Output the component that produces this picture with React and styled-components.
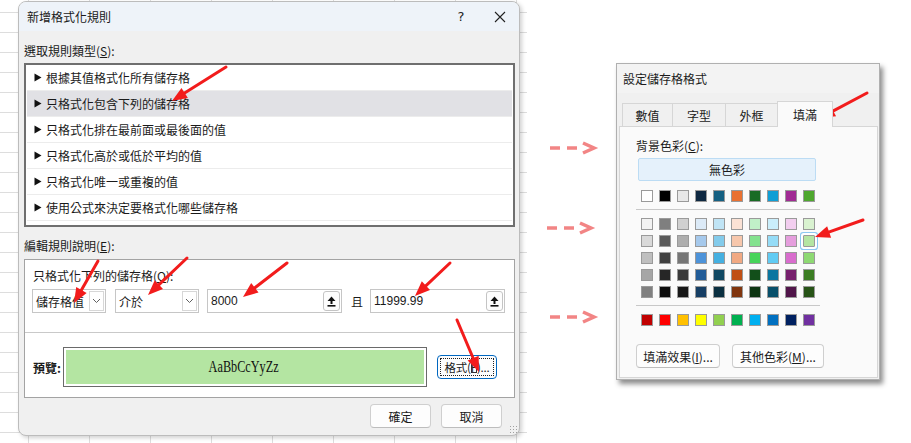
import React from "react";
import styled, { createGlobalStyle } from "styled-components";

const GlobalStyle = createGlobalStyle`
  html, body {
    margin: 0;
    padding: 0;
    background: #ffffff;
  }
  body {
    font-family: "Noto Sans CJK TC", "Noto Sans", sans-serif;
    font-size: 12px;
    color: #1b1b1b;
  }
`;

const ruleTypes = [
  "根據其值格式化所有儲存格",
  "只格式化包含下列的儲存格",
  "只格式化排在最前面或最後面的值",
  "只格式化高於或低於平均的值",
  "只格式化唯一或重複的值",
  "使用公式來決定要格式化哪些儲存格",
];

const baseRow = ["#ffffff", "#000000", "#e8e8e8", "#0e2841", "#156082", "#e97132", "#196b24", "#0f9ed5", "#a02b93", "#4ea72e"];

const themeRows = [
  ["#f2f2f2", "#7f7f7f", "#d0d0d0", "#dceaf7", "#c0e4f5", "#fbe2d5", "#c1f0c8", "#caeefb", "#f2ceef", "#d9f2d0"],
  ["#d9d9d9", "#595959", "#aeaeae", "#a6c9ec", "#83cbeb", "#f7c7ac", "#83e28e", "#95dcf7", "#e59edd", "#b4e5a2"],
  ["#bfbfbf", "#404040", "#767676", "#4d93d9", "#45b0e1", "#f1a983", "#47d45a", "#61cbf3", "#d86dcd", "#8ed973"],
  ["#a6a6a6", "#262626", "#3a3a3a", "#215c98", "#104862", "#c04f15", "#124f1a", "#0b76a0", "#77206d", "#3b7d23"],
  ["#808080", "#0d0d0d", "#171717", "#163e64", "#0b3041", "#80350e", "#0d3512", "#074f6a", "#501549", "#275317"],
];

const standardRow = ["#c00000", "#ff0000", "#ffc000", "#ffff00", "#92d050", "#00b050", "#00b0f0", "#0070c0", "#002060", "#7030a0"];

const redArrows = [
  [226, 67, 172, 101],
  [98, 261, 74, 303],
  [187, 258, 148, 295],
  [287, 263, 243, 297],
  [450, 263, 415, 296],
  [457, 320, 479, 372],
  [867, 93, 820, 118],
  [863, 220, 815, 237],
];

const dashArrows = [
  [550, 148],
  [547, 228],
  [550, 317],
];

const RedArrow = ({ x1, y1, x2, y2 }) => {
  const dx = x2 - x1;
  const dy = y2 - y1;
  const len = Math.sqrt(dx * dx + dy * dy);
  const ux = dx / len;
  const uy = dy / len;
  const headLen = 15;
  const headW = 6;
  const bx = x2 - ux * headLen;
  const by = y2 - uy * headLen;
  const pts = `${x2},${y2} ${bx - uy * headW},${by + ux * headW} ${bx + uy * headW},${by - ux * headW}`;
  return (
    <g>
      <line x1={x1} y1={y1} x2={bx + ux * 2} y2={by + uy * 2} stroke="#f21c1c" strokeWidth="3" strokeLinecap="round" />
      <polygon points={pts} fill="#f21c1c" />
    </g>
  );
};

const DashArrow = ({ x, y }) => (
  <g stroke="#f28585" strokeWidth="3.5" fill="none">
    <line x1={x} y1={y} x2={x + 10} y2={y} />
    <line x1={x + 17} y1={y} x2={x + 27} y2={y} />
    <polyline points={`${x + 33},${y - 5} ${x + 44},${y} ${x + 33},${y + 5}`} strokeLinejoin="miter" />
  </g>
);

const Chevron = () => (
  <svg width="9" height="6" viewBox="0 0 9 6">
    <polyline points="1,1 4.5,4.5 8,1" fill="none" stroke="#606060" strokeWidth="1" />
  </svg>
);

const RefIcon = () => (
  <svg width="9" height="11" viewBox="0 0 9 11">
    <polygon points="4.5,0.5 8.5,5 5.5,5 5.5,8 3.5,8 3.5,5 0.5,5" fill="#111" />
    <rect x="0.5" y="9" width="8" height="1.6" fill="#111" />
  </svg>
);

const CloseIcon = () => (
  <svg width="12" height="12" viewBox="0 0 12 12">
    <path d="M1 1 L11 11 M11 1 L1 11" stroke="#222" strokeWidth="1.1" />
  </svg>
);

const BulletIcon = () => (
  <svg width="8" height="9" viewBox="0 0 8 9">
    <polygon points="0.5,0.5 7.5,4.5 0.5,8.5" fill="#111" />
  </svg>
);

export default function App() {
  return (
    <Page>
      <GlobalStyle />
      <SheetArea>
        <RuleDialog>
          <TitleBar>
            <TitleText>新增格式化規則</TitleText>
            <TitleControls>
              <HelpMark>?</HelpMark>
              <CloseMark>
                <CloseIcon />
              </CloseMark>
            </TitleControls>
          </TitleBar>
          <DialogBody>
            <SectionLabel>
              選取規則類型(<u>S</u>):
            </SectionLabel>
            <ListBox>
              {ruleTypes.map((t, i) => (
                <ListItem key={t} $selected={i === 1}>
                  <Bullet>
                    <BulletIcon />
                  </Bullet>
                  {t}
                </ListItem>
              ))}
            </ListBox>
            <SectionLabel $gap={12}>
              編輯規則說明(<u>E</u>):
            </SectionLabel>
            <EditPanel>
              <ConditionSection>
                <ConditionLabel>
                  只格式化下列的儲存格(<u>O</u>):
                </ConditionLabel>
                <ControlRow>
                  <Combo $w={74}>
                    <FieldText>儲存格值</FieldText>
                    <DropButton>
                      <Chevron />
                    </DropButton>
                  </Combo>
                  <Combo $w={84}>
                    <FieldText>介於</FieldText>
                    <DropButton>
                      <Chevron />
                    </DropButton>
                  </Combo>
                  <Combo $w={135}>
                    <FieldText $num>8000</FieldText>
                    <RefButton>
                      <RefIcon />
                    </RefButton>
                  </Combo>
                  <AndText>且</AndText>
                  <Combo $w={135}>
                    <FieldText $num>11999.99</FieldText>
                    <RefButton>
                      <RefIcon />
                    </RefButton>
                  </Combo>
                </ControlRow>
              </ConditionSection>
              <PreviewSection>
                <PreviewLabel>預覽:</PreviewLabel>
                <PreviewBox>
                  <PreviewFill>
                    <PreviewText>AaBbCcYyZz</PreviewText>
                  </PreviewFill>
                </PreviewBox>
                <FormatButton>
                  <FocusRing>
                    格式(<u>F</u>)...
                  </FocusRing>
                </FormatButton>
              </PreviewSection>
            </EditPanel>
            <FooterRow>
              <PlainButton $w={61}>確定</PlainButton>
              <PlainButton $w={61}>取消</PlainButton>
            </FooterRow>
          </DialogBody>
          <Grip />
        </RuleDialog>
      </SheetArea>

      <FormatDialog>
        <FormatTitle>設定儲存格格式</FormatTitle>
        <TabRow>
          <Tab $w={51}>數值</Tab>
          <Tab $w={54}>字型</Tab>
          <Tab $w={53}>外框</Tab>
          <Tab $w={56} $active>
            填滿
          </Tab>
        </TabRow>
        <TabPanel>
          <SectionLabel $gap={0}>
            背景色彩(<u>C</u>):
          </SectionLabel>
          <NoColorButton>無色彩</NoColorButton>
          <SwatchRow $top={9}>
            {baseRow.map((c, i) => (
              <Swatch key={i} style={{ background: c }} />
            ))}
          </SwatchRow>
          <Divider $top={7} />
          <SwatchGrid>
            {themeRows.map((row, r) => (
              <SwatchRow key={r} $top={0}>
                {row.map((c, i) => (
                  <Swatch key={i} style={{ background: c }} $picked={r === 1 && i === 9} />
                ))}
              </SwatchRow>
            ))}
          </SwatchGrid>
          <Divider $top={7} />
          <SwatchRow $top={8}>
            {standardRow.map((c, i) => (
              <Swatch key={i} style={{ background: c }} />
            ))}
          </SwatchRow>
          <PanelButtons>
            <PlainButton $w={84}>
              填滿效果(<u>I</u>)...
            </PlainButton>
            <PlainButton $w={92}>
              其他色彩(<u>M</u>)...
            </PlainButton>
          </PanelButtons>
        </TabPanel>
      </FormatDialog>

      <Overlay width="911" height="443" viewBox="0 0 911 443">
        {dashArrows.map(([x, y], i) => (
          <DashArrow key={i} x={x} y={y} />
        ))}
        {redArrows.map(([x1, y1, x2, y2], i) => (
          <RedArrow key={i} x1={x1} y1={y1} x2={x2} y2={y2} />
        ))}
      </Overlay>
    </Page>
  );
}

const Page = styled.div`
  position: relative;
  width: 911px;
  height: 443px;
  overflow: hidden;
  display: flex;
  align-items: flex-start;
  background: #ffffff;
`;

const SheetArea = styled.div`
  width: 527px;
  height: 443px;
  flex-shrink: 0;
  box-sizing: border-box;
  padding: 1px 0 0 18px;
  background-color: #ffffff;
  background-image: linear-gradient(to right, #dddddd 1px, transparent 1px),
    linear-gradient(to bottom, #dddddd 1px, transparent 1px);
  background-size: 61px 20px;
  background-position: 28px 12px;
`;

const RuleDialog = styled.div`
  position: relative;
  width: 502px;
  height: 435px;
  box-sizing: border-box;
  border: 1px solid #bcbcbc;
  border-radius: 8px;
  background: #f0f0f0;
  box-shadow: 2px 2px 4px rgba(0, 0, 0, 0.18);
  overflow: hidden;
`;

const TitleBar = styled.div`
  height: 29px;
  display: flex;
  align-items: center;
  justify-content: space-between;
  padding-left: 8px;
  background: #eef3f9;
`;

const TitleText = styled.div`
  font-size: 12px;
  color: #1a1a1a;
`;

const TitleControls = styled.div`
  display: flex;
  align-items: center;
`;

const HelpMark = styled.div`
  width: 38px;
  text-align: center;
  font-family: "DejaVu Sans", sans-serif;
  font-size: 13px;
  color: #222;
`;

const CloseMark = styled.div`
  width: 40px;
  display: flex;
  justify-content: center;
  margin-right: -1px;
`;

const DialogBody = styled.div`
  padding: 0 4px 0 5px;
  display: flex;
  flex-direction: column;
`;

const SectionLabel = styled.div`
  margin-top: ${(p) => (p.$gap === undefined ? 13 : p.$gap)}px;
  height: 14px;
  line-height: 14px;
  font-size: 12px;
  color: #1a1a1a;
  u {
    text-decoration-thickness: 1px;
  }
`;

const ListBox = styled.div`
  margin-top: 5px;
  height: 164px;
  box-sizing: border-box;
  border: 2px solid #6f6f6f;
  background: #ffffff;
  padding: 0 1px;
  display: flex;
  flex-direction: column;
`;

const ListItem = styled.div`
  height: 26px;
  flex-shrink: 0;
  box-sizing: border-box;
  display: flex;
  align-items: center;
  padding-left: 7px;
  font-size: 12px;
  color: #1a1a1a;
  background: ${(p) => (p.$selected ? "#e1e1e5" : "transparent")};
  border-bottom: 1px solid #ececec;
`;

const Bullet = styled.span`
  display: flex;
  align-items: center;
  margin-right: 4px;
`;

const EditPanel = styled.div`
  margin-top: 6px;
  height: 139px;
  box-sizing: border-box;
  border: 1px solid #a3a3a3;
  background: #ffffff;
  display: flex;
  flex-direction: column;
`;

const ConditionSection = styled.div`
  height: 73px;
  box-sizing: border-box;
  border-bottom: 1px solid #c9c9c9;
  padding: 9px 0 0 7px;
`;

const ConditionLabel = styled.div`
  height: 14px;
  line-height: 14px;
  padding-left: 1px;
  font-size: 12px;
`;

const ControlRow = styled.div`
  margin-top: 6px;
  display: flex;
  align-items: center;
  gap: 0 9px;
  & > :nth-child(3) {
    margin-left: -1px;
  }
`;

const Combo = styled.div`
  width: ${(p) => p.$w}px;
  height: 24px;
  box-sizing: border-box;
  border: 1px solid #c6c6c6;
  background: #ffffff;
  display: flex;
  align-items: center;
  justify-content: space-between;
  padding: 0 1px 0 3px;
`;

const FieldText = styled.span`
  font-family: ${(p) => (p.$num ? '"Liberation Sans", Arial' : '"Noto Sans CJK TC"')}, sans-serif;
  font-size: 12px;
  color: #1a1a1a;
`;

const DropButton = styled.div`
  width: 15px;
  height: 20px;
  box-sizing: border-box;
  border: 1px solid #d7d7d7;
  display: flex;
  align-items: center;
  justify-content: center;
`;

const RefButton = styled.div`
  width: 17px;
  height: 20px;
  box-sizing: border-box;
  border: 1px solid #c4c4c4;
  border-radius: 3px;
  background: #fdfdfd;
  display: flex;
  align-items: center;
  justify-content: center;
`;

const AndText = styled.span`
  width: 10px;
  text-align: center;
  font-size: 12px;
`;

const PreviewSection = styled.div`
  flex: 1;
  display: flex;
  align-items: center;
  padding: 4px 0 0 8px;
`;

const PreviewLabel = styled.div`
  width: 30px;
  font-size: 12px;
  font-weight: 700;
`;

const PreviewBox = styled.div`
  width: 364px;
  height: 40px;
  box-sizing: border-box;
  border: 1px solid #6a6a6a;
  padding: 2px;
  background: #ffffff;
`;

const PreviewFill = styled.div`
  height: 100%;
  background: #b4e5a2;
  display: flex;
  align-items: center;
  justify-content: center;
`;

const PreviewText = styled.span`
  font-family: "Liberation Serif", "DejaVu Serif", serif;
  font-size: 17px;
  color: #111;
  display: inline-block;
  transform: scaleX(0.72);
  margin-left: -2px;
`;

const FormatButton = styled.div`
  margin-left: 10px;
  width: 60px;
  height: 24px;
  box-sizing: border-box;
  border: 1px solid #0067c0;
  border-radius: 4px;
  background: #fdfdfd;
  padding: 2px;
`;

const FocusRing = styled.div`
  height: 100%;
  box-sizing: border-box;
  border: 1px dotted #222;
  display: flex;
  align-items: center;
  justify-content: center;
  white-space: nowrap;
  font-size: 11.5px;
  letter-spacing: -0.2px;
  u {
    text-decoration: none;
    outline: 1px solid #333;
    outline-offset: -1px;
    line-height: 12px;
  }
`;

const FooterRow = styled.div`
  margin-top: 6px;
  display: flex;
  justify-content: flex-end;
  gap: 10px;
  padding-right: 13px;
`;

const PlainButton = styled.div`
  width: ${(p) => p.$w}px;
  height: 24px;
  box-sizing: border-box;
  border: 1px solid #cfcfcf;
  border-bottom-color: #bdbdbd;
  border-radius: 4px;
  background: #fdfdfd;
  display: flex;
  align-items: center;
  justify-content: center;
  white-space: nowrap;
  font-size: 12px;
  color: #1a1a1a;
`;

const Grip = styled.div`
  position: absolute;
  right: 2px;
  bottom: 2px;
  width: 8px;
  height: 8px;
  background-image: radial-gradient(#a0a0a0 0.8px, transparent 1px);
  background-size: 3px 3px;
`;

const FormatDialog = styled.div`
  margin: 63px 0 0 89px;
  width: 264px;
  height: 317px;
  flex-shrink: 0;
  box-sizing: border-box;
  border: 1px solid #b0b0b0;
  background: #f0f0f0;
  box-shadow: 3px 4px 5px rgba(0, 0, 0, 0.45);
  display: flex;
  flex-direction: column;
`;

const FormatTitle = styled.div`
  height: 29px;
  line-height: 29px;
  padding-left: 6px;
  background: #f3f3f3;
  font-size: 12px;
`;

const TabRow = styled.div`
  margin-top: 8px;
  padding-left: 5px;
  height: 25px;
  display: flex;
  align-items: flex-end;
`;

const Tab = styled.div`
  width: ${(p) => p.$w}px;
  height: ${(p) => (p.$active ? 26 : 23)}px;
  margin-bottom: ${(p) => (p.$active ? -1 : 0)}px;
  box-sizing: border-box;
  border: 1px solid #d6d6d6;
  border-bottom: none;
  margin-right: -1px;
  background: ${(p) => (p.$active ? "#fafafa" : "#f0f0f0")};
  position: relative;
  z-index: ${(p) => (p.$active ? 1 : 0)};
  display: flex;
  align-items: center;
  justify-content: center;
  font-size: 12px;
`;

const TabPanel = styled.div`
  margin: 0 1px 1px 2px;
  flex: 1;
  box-sizing: border-box;
  border: 1px solid #d6d6d6;
  background: #fafafa;
  padding: 12px 0 0 16px;
  display: flex;
  flex-direction: column;
`;

const NoColorButton = styled.div`
  margin: 5px 0 0 2px;
  width: 178px;
  height: 23px;
  box-sizing: border-box;
  border: 1px solid #bcdcf4;
  border-radius: 2px;
  background: #e5f1fb;
  display: flex;
  align-items: center;
  justify-content: center;
  font-size: 12px;
`;

const SwatchRow = styled.div`
  margin-top: ${(p) => p.$top}px;
  padding-left: 5px;
  display: flex;
  gap: 6px;
`;

const SwatchGrid = styled.div`
  margin-top: 8px;
  display: flex;
  flex-direction: column;
  gap: 5px;
`;

const Swatch = styled.div`
  width: 12px;
  height: 12px;
  box-sizing: border-box;
  border: 1px solid #9a9a9a;
  box-shadow: ${(p) => (p.$picked ? "0 0 0 2px #ffffff, 0 0 0 3px #8cc8f2" : "none")};
  border-radius: ${(p) => (p.$picked ? "1px" : "0")};
`;

const Divider = styled.div`
  margin-top: ${(p) => p.$top}px;
  width: 184px;
  height: 1px;
  background: #c8c8c8;
`;

const PanelButtons = styled.div`
  margin-top: 18px;
  display: flex;
  gap: 12px;
`;

const Overlay = styled.svg`
  position: absolute;
  left: 0;
  top: 0;
  pointer-events: none;
`;
